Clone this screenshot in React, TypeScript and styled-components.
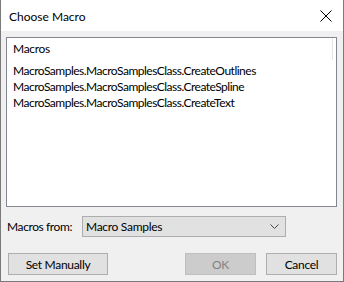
import React from 'react'
import styled, { createGlobalStyle } from 'styled-components'

const Global = createGlobalStyle`
  html, body { margin: 0; padding: 0; background: #f0f0f0; }
  * { box-sizing: border-box; }
`

const Window = styled.div`
  width: 344px;
  height: 282px;
  display: flex;
  flex-direction: column;
  border: 1px solid #7a7a7a;
  border-top: none;
  background: #f0f0f0;
  font-family: Lato, "Noto Sans", sans-serif;
  font-size: 12px;
  color: #000;
`

const TitleBar = styled.div`
  height: 31px;
  background: #fff;
  display: flex;
  align-items: center;
  justify-content: space-between;
  padding: 0 8px 0 8px;
  font-size: 12px;
`

const Title = styled.span`
  margin-top: 1px;
`

const CloseBtn = styled.div`
  width: 14px;
  height: 14px;
  margin-right: 2px;
  display: flex;
  align-items: center;
  justify-content: center;
`

const Body = styled.div`
  flex: 1;
  display: flex;
  flex-direction: column;
  padding: 6px 6px 0 5px;
  letter-spacing: -0.3px;
`

const ListBox = styled.div`
  height: 170px;
  background: #fff;
  border: 1px solid #828790;
  display: flex;
  flex-direction: column;
`

const HeaderRow = styled.div`
  height: 22px;
  display: flex;
`

const HeaderCell = styled.div`
  width: 326px;
  border-right: 1px solid #e5e5e5;
  padding: 3px 0 0 6px;
`

const Items = styled.div`
  display: flex;
  flex-direction: column;
  padding: 3px 0 0 6px;
  letter-spacing: -0.5px;
`

const Item = styled.div`
  height: 16px;
  line-height: 16px;
  white-space: nowrap;
`

const SourceRow = styled.div`
  display: flex;
  align-items: center;
  margin-top: 9px;
  height: 21px;
`

const Label = styled.span`
  width: 76px;
  padding-left: 1px;
  white-space: nowrap;
  letter-spacing: -0.4px;
`

const Combo = styled.div`
  width: 204px;
  height: 21px;
  border: 1px solid #adadad;
  background: #e1e1e1;
  display: flex;
  align-items: center;
  justify-content: space-between;
  padding: 0 6px 0 3px;
`

const ButtonRow = styled.div`
  display: flex;
  align-items: center;
  justify-content: space-between;
  margin-top: 16px;
  padding-left: 2px;
`

const ButtonGroup = styled.div`
  display: flex;
  gap: 10px;
`

const Button = styled.div<{ $w: number; $disabled?: boolean }>`
  width: ${p => p.$w}px;
  height: 22px;
  border: 1px solid ${p => (p.$disabled ? '#bfbfbf' : '#adadad')};
  background: ${p => (p.$disabled ? '#cccccc' : '#e1e1e1')};
  color: ${p => (p.$disabled ? '#838383' : '#000')};
  display: flex;
  align-items: center;
  justify-content: center;
`

const items = [
  'MacroSamples.MacroSamplesClass.CreateOutlines',
  'MacroSamples.MacroSamplesClass.CreateSpline',
  'MacroSamples.MacroSamplesClass.CreateText',
]

export default function App() {
  return (
    <>
      <Global />
      <Window>
        <TitleBar>
          <Title>Choose Macro</Title>
          <CloseBtn>
            <svg width="12" height="12" viewBox="0 0 12 12">
              <path d="M0.5 0.5 L11.5 11.5 M11.5 0.5 L0.5 11.5" stroke="#000" strokeWidth="1" />
            </svg>
          </CloseBtn>
        </TitleBar>
        <Body>
          <ListBox>
            <HeaderRow>
              <HeaderCell>Macros</HeaderCell>
            </HeaderRow>
            <Items>
              {items.map(i => (
                <Item key={i}>{i}</Item>
              ))}
            </Items>
          </ListBox>
          <SourceRow>
            <Label>Macros from:</Label>
            <Combo>
              <span>Macro Samples</span>
              <svg width="9" height="5" viewBox="0 0 9 5">
                <path d="M0.5 0.5 L4.5 4.5 L8.5 0.5" stroke="#444" fill="none" strokeWidth="1" />
              </svg>
            </Combo>
          </SourceRow>
          <ButtonRow>
            <Button $w={100}>Set Manually</Button>
            <ButtonGroup>
              <Button $w={71} $disabled>OK</Button>
              <Button $w={71}>Cancel</Button>
            </ButtonGroup>
          </ButtonRow>
        </Body>
      </Window>
    </>
  )
}
